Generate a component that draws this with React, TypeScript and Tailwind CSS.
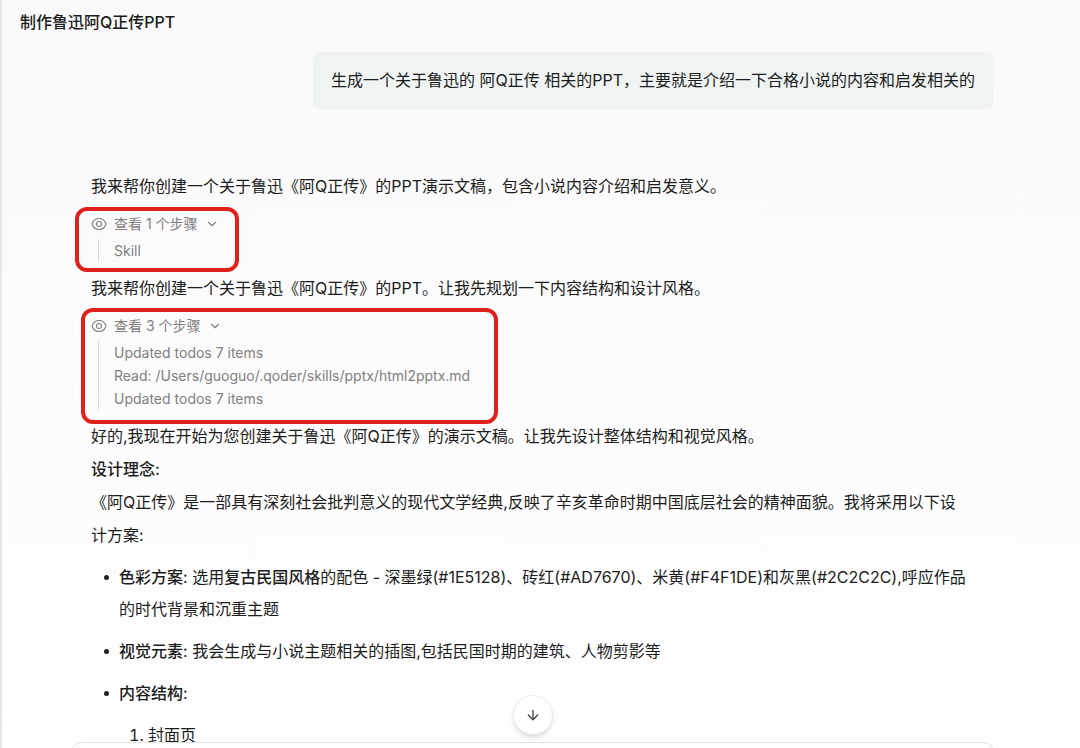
import type { ReactNode } from "react";
import { ArrowDown, ChevronDown } from "lucide-react";

const EyeIcon = () => (
  <svg
    className="h-4 w-4 shrink-0"
    viewBox="0 0 16 16"
    fill="none"
    stroke="currentColor"
    strokeWidth="1.1"
    aria-hidden="true"
  >
    <path d="M1 8C2.200 4.400 4.900 2.500 8 2.500s5.800 1.900 7 5.500c-1.200 3.600-3.900 5.500-7 5.500S2.200 11.600 1 8Z" />
    <circle cx="8" cy="8" r="2.5" />
  </svg>
);

type StepsProps = {
  items: string[];
  // red frame around the group
  frame: string;
};

const Steps = ({ items, frame }: StepsProps) => {
  return (
    <section className="relative w-fit pb-[10px] pt-[9px] text-sm text-[#808080]">
      <div
        className={`pointer-events-none absolute rounded-xl border-4 border-[#e0201b] ${frame}`}
      />
      <button type="button" className="flex h-6 items-center gap-[7px]">
        <EyeIcon />
        <span>查看 {items.length} 个步骤</span>
        <ChevronDown className="h-3.5 w-3.5" strokeWidth={2} />
      </button>
      <ul className="ml-[7px] mt-[3px] border-l border-[#dcdcdc] pl-[15px] leading-[23px]">
        {items.map((item, i) => (
          <li key={i}>{item}</li>
        ))}
      </ul>
    </section>
  );
};

const Bullet = ({ children }: { children: ReactNode }) => (
  <li className="relative pl-7">
    <span className="absolute left-[13px] top-[14px] h-[5px] w-[5px] rounded-full bg-[#222]" />
    {children}
  </li>
);

export default function App() {
  return (
    <div
      lang="zh-CN"
      className="flex h-screen flex-col overflow-hidden border-l-2 border-[#e6e7e7] bg-linear-to-b from-[#f9f9f9] to-[#fefefe] font-['Inter','Noto_Sans_CJK_SC',sans-serif] text-base text-[#1c1c1c]"
    >
      <header className="flex h-11 shrink-0 items-center px-[18px]">
        <h1 className="font-medium">制作鲁迅阿Q正传PPT</h1>
      </header>

      <main className="min-h-0 flex-1 overflow-hidden pl-[89px] pr-[87px] pt-2">
        <div className="flex justify-end">
          <p className="rounded-md bg-[#eff3f2] px-[18px] py-3 leading-[33px]">
            生成一个关于鲁迅的 阿Q正传 相关的PPT，主要就是介绍一下合格小说的内容和启发相关的
          </p>
        </div>

        <article className="mt-[61px] pr-6 leading-[33px]">
          <p>我来帮你创建一个关于鲁迅《阿Q正传》的PPT演示文稿，包含小说内容介绍和启发意义。</p>
          <Steps items={["Skill"]} frame="-left-4 -right-5 top-1 bottom-0" />
          <p>我来帮你创建一个关于鲁迅《阿Q正传》的PPT。让我先规划一下内容结构和设计风格。</p>
          <Steps
            items={[
              "Updated todos 7 items",
              "Read: /Users/guoguo/.qoder/skills/pptx/html2pptx.md",
              "Updated todos 7 items",
            ]}
            frame="-left-[10px] -right-7 top-[3px] -bottom-1"
          />
          <p>好的,我现在开始为您创建关于鲁迅《阿Q正传》的演示文稿。让我先设计整体结构和视觉风格。</p>
          <p className="font-medium">设计理念:</p>
          <p>
            《阿Q正传》是一部具有深刻社会批判意义的现代文学经典,反映了辛亥革命时期中国底层社会的精神面貌。我将采用以下设计方案:
          </p>

          <ul className="mt-[9px] space-y-[10px] leading-8">
            <Bullet>
              <strong className="font-medium">色彩方案</strong>: 选用
              <strong className="font-medium">复古民国风格</strong>的配色 -
              深墨绿(#1E5128)、砖红(#AD7670)、米黄(#F4F1DE)和灰黑(#2C2C2C),呼应作品的时代背景和沉重主题
            </Bullet>
            <Bullet>
              <strong className="font-medium">视觉元素</strong>:
              我会生成与小说主题相关的插图,包括民国时期的建筑、人物剪影等
            </Bullet>
            <Bullet>
              <strong className="font-medium">内容结构</strong>:
              <ol className="mt-[10px] list-inside list-decimal pl-[10px]">
                <li>封面页</li>
              </ol>
            </Bullet>
          </ul>
        </article>
      </main>

      {/* top edge of the composer */}
      <footer className="relative ml-[68px] mr-[85px] h-[6px] shrink-0">
        <div className="absolute inset-x-0 top-0 h-12 rounded-t-xl border border-[#dde5de] bg-[#fdfefc]" />
        <button
          type="button"
          aria-label="滚动到底部"
          className="absolute -top-[47px] left-1/2 flex h-10 w-10 -translate-x-1/2 items-center justify-center rounded-full border border-[#ececec] bg-white text-[#444] shadow-md"
        >
          <ArrowDown className="h-4 w-4" strokeWidth={2} />
        </button>
      </footer>
    </div>
  );
}
